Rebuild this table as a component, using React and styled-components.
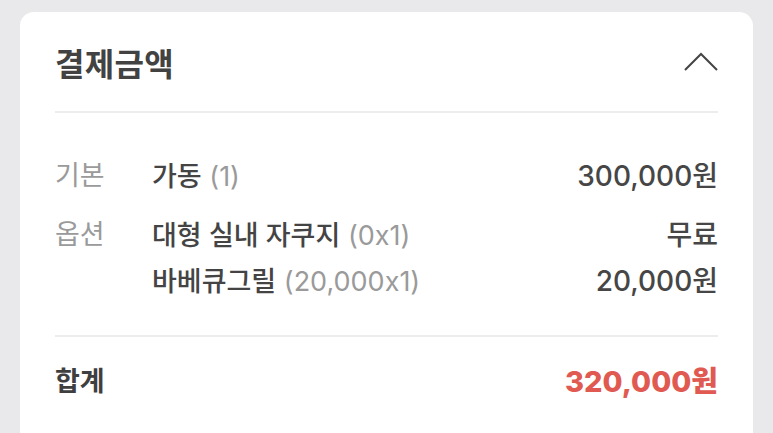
import React from "react";
import styled, { createGlobalStyle } from "styled-components";

const GlobalStyle = createGlobalStyle`
  html, body {
    margin: 0;
    padding: 0;
    background: #e9e9eb;
    font-family: Inter, "Noto Sans CJK KR", "Noto Sans", sans-serif;
  }
`;

const Page = styled.div`
  height: 433px;
  overflow: hidden;
  padding: 12px 20px 0;
  box-sizing: border-box;
`;

const Card = styled.div`
  background: #ffffff;
  border-radius: 14px 14px 0 0;
  padding: 0 35px;
  min-height: 440px;
`;

const Header = styled.div`
  height: 99px;
  display: flex;
  align-items: center;
  justify-content: space-between;
`;

const Title = styled.h2`
  margin: 0;
  font-size: 32px;
  font-weight: 700;
  color: #424242;
  letter-spacing: 0.3px;
`;

const ToggleButton = styled.button`
  border: 0;
  background: none;
  padding: 0;
  width: 34px;
  height: 20px;
  display: flex;
  align-items: center;
  justify-content: center;
  cursor: pointer;
`;

const Divider = styled.div`
  height: 2px;
  background: #ececec;
`;

const Section = styled.div`
  padding: ${(p) => p.$pad};
  display: flex;
  flex-direction: column;
  gap: 13px;
`;

const Group = styled.div`
  display: flex;
`;

const Label = styled.div`
  width: 97px;
  flex-shrink: 0;
  font-size: 27px;
  line-height: 46px;
  color: ${(p) => (p.$strong ? "#3f3f3f" : "#9a9a9a")};
  font-weight: ${(p) => (p.$strong ? 700 : 400)};
`;

const Lines = styled.div`
  flex: 1;
  display: flex;
  flex-direction: column;
`;

const Line = styled.div`
  display: flex;
  align-items: baseline;
  justify-content: ${(p) => (p.$end ? "flex-end" : "space-between")};
  font-size: 27px;
  line-height: 46px;
  height: 46px;
`;

const Name = styled.span`
  color: #444444;
  font-weight: 500;
`;

const Note = styled.span`
  color: #9a9a9a;
  font-weight: 400;
`;

const Price = styled.span`
  font-size: ${(p) => (p.$total ? "29px" : "28px")};
  color: ${(p) => (p.$total ? "#e05a52" : "#464646")};
  font-weight: ${(p) => (p.$total ? 800 : 500)};
`;

const groups = [
  {
    label: "기본",
    items: [{ name: "가동", note: "(1)", price: "300,000원" }],
  },
  {
    label: "옵션",
    items: [
      { name: "대형 실내 자쿠지", note: "(0x1)", price: "무료" },
      { name: "바베큐그릴", note: "(20,000x1)", price: "20,000원" },
    ],
  },
];

const App = () => {
  return (
    <Page>
      <GlobalStyle />
      <Card>
        <Header>
          <Title>결제금액</Title>
          <ToggleButton aria-label="접기">
            <svg width="34" height="20" viewBox="0 0 34 20">
              <polyline
                points="1,18 17,2 33,18"
                fill="none"
                stroke="#444"
                strokeWidth="2"
              />
            </svg>
          </ToggleButton>
        </Header>
        <Divider />
        <Section $pad="40px 0 31px">
          {groups.map((g) => (
            <Group key={g.label}>
              <Label>{g.label}</Label>
              <Lines>
                {g.items.map((it) => (
                  <Line key={it.name}>
                    <span>
                      <Name>{it.name}</Name> <Note>{it.note}</Note>
                    </span>
                    <Price>{it.price}</Price>
                  </Line>
                ))}
              </Lines>
            </Group>
          ))}
        </Section>
        <Divider />
        <Section $pad="22px 0">
          <Group>
            <Label $strong>합계</Label>
            <Lines>
              <Line $end>
                <Price $total>320,000원</Price>
              </Line>
            </Lines>
          </Group>
        </Section>
      </Card>
    </Page>
  );
};

export default App;
